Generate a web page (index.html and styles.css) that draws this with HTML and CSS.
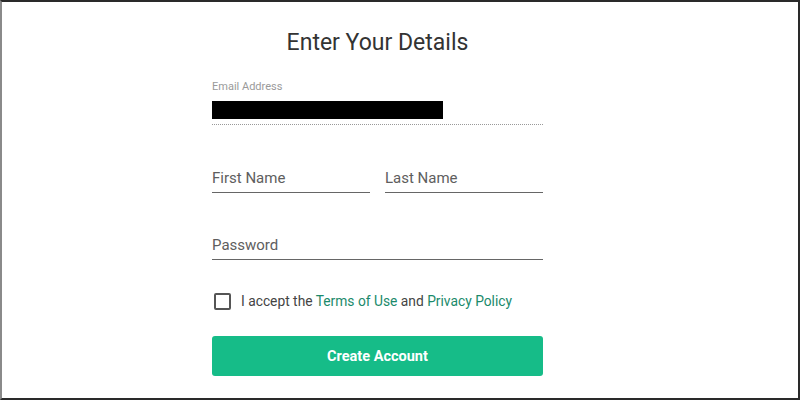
FILE: index.html
```html
<!DOCTYPE html>
<html>
<head>
<meta charset="utf-8">
<link rel="stylesheet" href="styles.css">
</head>
<body>
<div class="frame">
  <form class="form">
    <h1 class="title">Enter Your Details</h1>
    <div class="field email">
      <div class="small-label">Email Address</div>
      <div class="redact"></div>
    </div>
    <div class="row">
      <div class="field line half"><span class="ph">First Name</span></div>
      <div class="field line half"><span class="ph">Last Name</span></div>
    </div>
    <div class="field line pw"><span class="ph">Password</span></div>
    <label class="accept">
      <span class="box"></span>
      <span class="accept-text">I accept the <a class="link">Terms of Use</a> and <a class="link">Privacy Policy</a></span>
    </label>
    <div class="btn">Create Account</div>
  </form>
</div>
</body>
</html>
```
FILE: styles.css
```css
html, body {
  margin: 0;
  padding: 0;
  background: #fff;
}
body {
  font-family: Roboto, "Liberation Sans", sans-serif;
}
.frame {
  box-sizing: border-box;
  width: 800px;
  height: 400px;
  border-top: 2px solid #2a2a2a;
  border-left: 2px solid #8a8a8a;
  border-right: 2px solid #2a2a2a;
  border-bottom: 2px solid #2a2a2a;
  display: flex;
  justify-content: center;
}
.form {
  width: 331px;
  margin-left: -45px;
  display: flex;
  flex-direction: column;
}
.title {
  margin: 28px 0 0 0;
  text-align: center;
  font-size: 23px;
  font-weight: 400;
  color: #333;
  line-height: 26px;
}
.email {
  margin-top: 24px;
  border-bottom: 1px dotted #999;
  padding-bottom: 5px;
}
.small-label {
  font-size: 11px;
  color: #9a9a9a;
  line-height: 14px;
}
.redact {
  margin-top: 7px;
  width: 231px;
  height: 18px;
  background: #000;
}
.row {
  display: flex;
  gap: 15px;
  margin-top: 43px;
}
.half {
  flex: 1;
}
.line {
  border-bottom: 1px solid #666;
  padding-bottom: 4px;
}
.ph {
  font-size: 15px;
  color: #5e5e5e;
  line-height: 20px;
}
.pw {
  margin-top: 42px;
}
.accept {
  display: flex;
  align-items: center;
  margin-top: 32px;
  margin-left: 2px;
}
.box {
  box-sizing: border-box;
  width: 17px;
  height: 17px;
  border: 2px solid #555;
  border-radius: 2px;
}
.accept-text {
  margin-left: 10px;
  font-size: 13.8px;
  color: #444;
  line-height: 18px;
}
.link {
  color: #1b8a6b;
  text-decoration: none;
}
.btn {
  margin-top: 26px;
  height: 40px;
  border-radius: 3px;
  background: #16bc88;
  color: #fff;
  font-weight: 700;
  font-size: 14.5px;
  display: flex;
  align-items: center;
  justify-content: center;
}
```
